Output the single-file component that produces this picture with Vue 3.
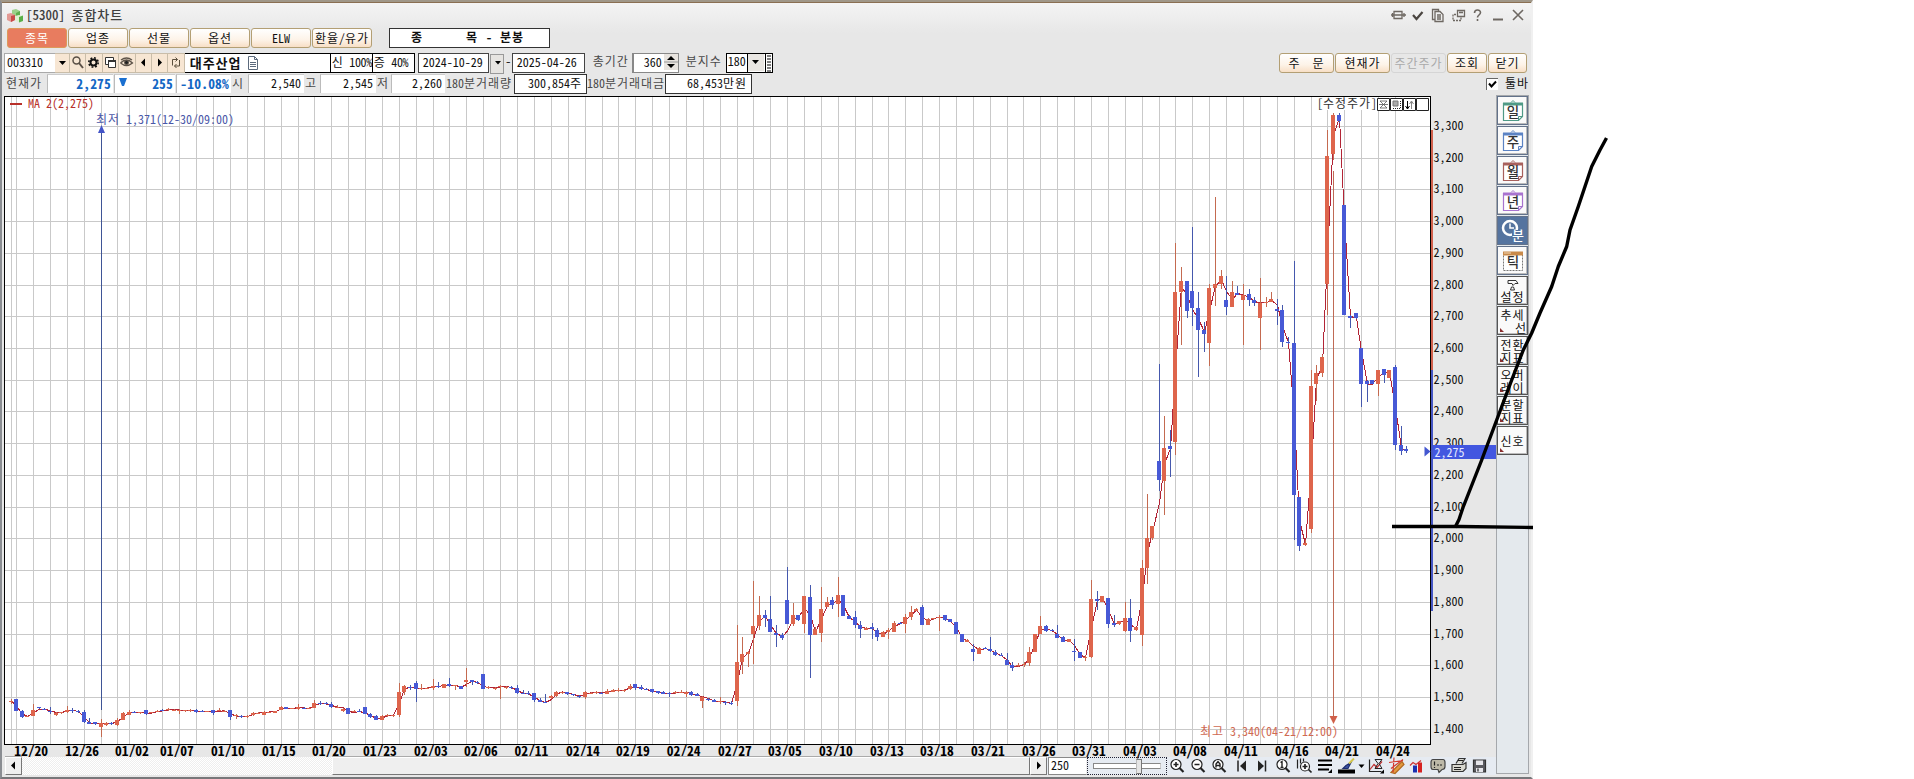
<script setup>
import { h } from 'vue'

// Splits text so that Hangul runs can be spaced onto a full-width cell.
const T = (props) => {
  const tag = props.svg !== undefined ? 'tspan' : 'span'
  return h(tag, { class: 'run' }, props.t.split(/([가-힣]+)/).filter(Boolean).map(s =>
    h(tag, { class: /[가-힣]/.test(s) ? 'ko' : 'en' }, s)))
}
T.props = ['t', 'svg']

const tabs = ['종목', '업종', '선물', '옵션', 'ELW', '환율/유가']

const gridX = [11, 16, 33, 50, 67, 84, 101, 117, 129, 146, 162, 179, 196, 213, 230, 247, 264, 281, 298, 314, 331, 348, 365, 382, 399, 416, 433, 449, 466, 483, 500, 517, 534, 551, 568, 585, 602, 618, 635, 652, 669, 686, 703, 720, 737, 753, 770, 787, 804, 821, 838, 855, 872, 888, 905, 922, 939, 956, 973, 990, 1007, 1023, 1040, 1057, 1074, 1091, 1108, 1125, 1142, 1159, 1175, 1192, 1209, 1226, 1243, 1260, 1277, 1294, 1311, 1327, 1344, 1361, 1378, 1395]
const prices = Array.from({ length: 20 }, (_, i) => {
  const v = String(3300 - i * 100)
  return { label: v[0] + ',' + v.slice(1), y: Math.floor(126.3 + i * 31.74) }
})
const dates = [['12/20', 31.3], ['12/26', 82.3], ['01/02', 132], ['01/07', 177], ['01/10', 228], ['01/15', 279], ['01/20', 329], ['01/23', 380], ['02/03', 431], ['02/06', 481], ['02/11', 531.4], ['02/14', 583], ['02/19', 633], ['02/24', 683.7], ['02/27', 735], ['03/05', 785], ['03/10', 836], ['03/13', 887], ['03/18', 937], ['03/21', 988], ['03/26', 1039], ['03/31', 1089], ['04/03', 1140], ['04/08', 1190], ['04/11', 1241], ['04/16', 1292], ['04/21', 1342], ['04/24', 1393]]

// Sessions: origin, horizontal unit, then "x colour high top bottom low" entries.
const segments = [
  [0, 560, 3, `34 r 417 424 426 432;48 b 417 417 453 453;66 b 450 454 470 474;82 r 467 469 471 472;100 r 432 450 467 467;118 b 442 442 444 446;134 b 444 446 449 449;152 b 441 452 456 462;168 r 455 460 464 468;185 r 455 457 459 462;203 r 438 451 456 458;218 b 445 450 452 460;236 b 450 453 455 458;252 b 450 456 486 489;267 b 475 487 491 493;285 b 486 487 492 494;304 r 478 489 501 530;318 r 485 489 496 498;335 b 487 489 492 495;351 r 475 480 494 498;369 r 456 458 479 479;388 r 450 457 464 466;404 b 452 455 458 460;420 r 455 457 459 461;438 b 450 450 461 464;455 r 455 457 459 460;472 r 450 453 455 457;488 b 447 450 452 453;505 r 443 448 451 454;522 r 447 449 451 452;538 r 446 449 452 462;556 r 449 450 452 455;572 r 447 449 452 456;589 b 447 450 456 460;606 b 450 453 455 455;622 r 452 453 455 455;640 b 450 450 459 464;658 r 445 450 453 453;674 r 450 453 456 457;690 b 450 450 470 479;708 r 461 466 469 476;725 b 464 467 469 473;742 r 464 469 471 473;760 r 456 458 466 468;776 r 457 459 461 463;793 r 452 456 464 466;808 r 455 457 459 460;826 r 452 454 459 459;844 r 437 441 450 450;860 b 440 442 447 447;878 r 443 444 446 446;895 r 432 441 448 450;912 b 440 443 446 446;928 r 441 444 446 446;943 r 420 429 444 444;961 b 423 430 433 435;978 b 425 430 432 433;994 b 427 432 441 445;1012 r 436 440 442 443;1029 r 443 448 454 456;1045 b 444 444 461 461;1062 r 450 452 457 457;1078 b 448 452 455 457;1096 b 442 442 461 463;1112 b 460 462 471 473;1129 b 466 468 480 480;1147 r 466 468 480 480;1163 r 463 466 469 470;1180 r 464 466 469 470;1198 r 369 396 464 471;1213 r 374 378 396 405;1231 b 374 380 383 391;1248 b 363 369 387 426;1264 r 372 384 387 389;1282 r 381 383 385 387;1300 r 357 378 383 390;1315 b 367 379 382 383;1332 r 371 372 384 384;1349 b 354 372 377 380;1366 r 374 376 379 389;1383 b 377 378 386 388;1399 r 324 360 366 380;1416 b 359 361 367 375;1432 b 364 366 369 371;1449 b 342 342 387 387`],
  [480, 560, 2.45, `22 r 377 382 385 388;37 r 382 384 387 389;50 r 375 379 382 416;64 r 377 380 383 386;78 b 377 380 384 388;91 b 374 383 398 402;106 b 390 398 401 403;119 b 393 398 402 405;133 b 400 400 419 425;147 b 415 420 425 426;160 b 402 425 429 429;175 r 405 408 414 416;187 r 394 397 407 410;201 r 396 397 399 401;215 b 396 397 403 405;229 b 401 403 406 408;243 b 406 409 412 414;258 r 394 396 410 416;272 r 396 398 401 403;286 r 394 397 399 401;298 b 396 398 401 401;312 r 388 392 402 402;326 r 386 391 395 396;340 r 384 389 393 395;354 r 387 389 394 396;368 r 371 378 387 389;381 b 372 372 383 389;396 b 375 382 386 389;409 b 384 386 388 389;422 b 386 387 396 398;437 b 392 394 398 401;450 b 394 397 401 403;464 b 396 398 401 410;478 r 394 396 400 401;493 r 391 395 397 399;506 r 392 396 402 410;518 b 394 396 404 407;532 b 400 403 407 409;546 r 407 411 423 443;560 b 415 417 420 422;575 b 418 421 425 427;589 r 412 424 427 431;602 b 422 427 430 435;616 b 424 429 432 436`],
  [720, 540, 3, `52 r 255 366 483 499;67 r 291 342 366 402;85 r 333 336 343 381;100 r 123 258 283 372;118 r 168 225 258 271;136 b 210 225 234 261;151 b 168 237 276 276;169 b 255 279 284 320;187 b 279 285 294 301;201 b 82 180 252 252;220 r 189 225 252 258;234 b 225 225 240 243;252 r 168 168 252 279;270 b 135 171 285 413;285 r 262 266 285 285;303 r 141 207 279 305;321 r 171 186 201 201;336 b 171 180 195 208;354 r 111 165 192 231;369 b 165 165 228 228;387 b 225 227 236 236;405 b 213 231 255 264;421 b 243 255 266 293;438 r 260 264 269 269;457 b 249 262 268 297;471 b 265 269 291 302;489 r 274 276 291 291;505 r 265 270 276 296;522 r 243 249 276 276;540 b 246 248 252 252;556 r 222 231 252 280;574 r 198 216 231 240;590 r 204 207 213 213;606 b 195 201 255 255;624 r 234 237 255 255;640 r 233 235 238 240;658 r 225 231 235 272;675 b 225 225 240 243;691 b 236 238 245 245;708 b 246 246 283 283;726 b 282 282 305 305;741 r 297 299 305 305;760 b 312 327 335 362;777 r 320 323 342 342;795 b 322 324 327 327;811 b 291 327 333 335;826 b 330 335 345 348;844 b 339 344 348 348;861 b 339 360 375 375;877 b 366 375 383 392;895 r 370 375 379 381;913 r 365 371 374 380;928 r 321 336 369 378;945 r 282 282 335 335;960 r 228 258 282 282;978 b 255 258 273 276;996 b 266 269 274 274;1012 b 255 282 293 293;1029 b 288 291 305 305;1047 r 296 298 305 305;1062 b 297 332 337 362;1080 b 336 336 354 354;1096 r 345 350 353 362;1113 r 120 177 350 353;1131 b 153 177 182 210;1146 r 168 168 186 186;1164 b 174 174 252 264;1183 b 225 249 255 260;1198 r 242 243 253 255;1215 r 186 234 273 276;1231 b 177 234 273 305;1248 r 260 261 270 272;1266 r 60 84 285 317`],
  [1080, 220, 3, `201 r 822 954 1044 1092;218 r 918 918 954 960;237 b 432 723 780 812;252 r 588 684 783 885;270 b 630 678 687 771;285 r 69 216 666 705;303 r 141 183 216 375;321 b 183 183 272 293;336 b 21 213 264 318;354 b 216 264 330 470;372 b 306 330 342 395;387 r 192 204 369 438;405 r -69 192 203 258;423 r 150 168 192 208;438 b 168 240 261 285;456 r 183 216 261 261;473 b 198 219 224 224;489 r 192 225 240 375;508 b 207 222 240 258;523 b 231 240 248 257;541 r 174 249 293 390;558 r 231 246 249 261;573 r 216 237 246 246;592 b 237 268 272 315;606 b 255 269 366 380;624 b 351 365 368 372;642 b 123 369 825 960;657 b 831 831 978 993;675 r 960 970 975 978;693 r 450 498 927 939;708 r 435 459 492 543;726 r 405 411 459 470;741 r -270 -192 192 285;759 r -321 -315 -198 -180;777 b -321 -315 -297 -290;792 b -45 -45 285 285;810 b 285 289 293 323;828 b 279 279 293 297;843 b 384 384 492 560;861 b 480 483 492 545;876 b 480 480 492 492;894 r 450 450 492 528;912 b 447 447 465 488;927 r 450 450 473 473;945 b 435 441 675 690;963 b 618 675 693 705;978 b 678 687 692 698`]
]
const candles = segments.flatMap(([ox, oy, k, src]) => src.split(';').map(e => {
  const [x, c, ...v] = e.split(' ')
  const [hi, top, bot, lo] = v.map(n => Math.round(oy + n / 3))
  return { x: Math.floor(ox + x / k), c, hi, top, bot: Math.max(bot, top + 1), lo }
}))
const close = c => (c.c === 'r' ? c.top : c.bot)
const ma = candles.map((c, i) => `${c.x + 0.5},${(close(c) + close(candles[Math.max(0, i - 1)])) / 2}`).join(' ')

const periods = [['일', '#4f9a86'], ['주', '#5b83c4'], ['월', '#a8605c'], ['년', '#a873cf']]
const tools = [['추세', '선'], ['전환', '지표'], ['오버', '레이'], ['분할', '지표'], ['신호']]
</script>

<template>
  <div class="page">
    <div class="window">
      <header class="title">
        <svg class="logo" width="18" height="14" viewBox="0 0 18 14">
          <path d="M5 1l4-1 4 2v5l-4 2-4-2z" fill="#9bd08a" /><path d="M9 4l4-2v5l-4 2z" fill="#5fae4e" />
          <path d="M0 5l4-1 4 2v5l-4 2-4-2z" fill="#e39a94" /><path d="M4 7l4-1v5l-4 2z" fill="#c94a48" />
          <path d="M8 7l4-1 4 1v5l-4 1.500-4-2z" fill="#dff0d2" /><path d="M12 8l4-1.500v5.500l-4 1.500z" fill="#58b048" />
        </svg>
        <span class="caption"><T t="[5300] 종합차트" /></span>
        <svg class="sys" width="140" height="18" viewBox="0 0 140 18" fill="none" stroke="#6e6862" stroke-width="1.300">
          <path d="M1 9h3M12 9h4M4 5.500h8v7H4zM2.500 7v4M4 9h8M14 7v4" />
          <path d="M23 9l3.500 4 6-7" stroke="#4b4641" stroke-width="2.200" />
          <path d="M44.500 13.500h-2v-10h6v2M45 5.500h5l3 3v7h-8zM47 9h4M47 11h4M47 13h4" />
          <path d="M67.500 4.500h7v6h-7zM69 6.500h4" /><path d="M66 8.500h-3v6h8v-3" stroke-dasharray="2 1" />
          <path d="M84.500 7c0-4 6-4 6-.5 0 2.500-3 2.500-3 5M87.500 13v2" stroke-width="1.600" />
          <path d="M103 13.500h10" stroke-width="2" />
          <path d="M123 4l10 10M133 4l-10 10" stroke-width="1.600" />
        </svg>
      </header>

      <nav class="tabs">
        <button v-for="(t, i) in tabs" :key="t" class="btn" :class="{ on: i === 0 }"><T :t="t" /></button>
        <div class="mode"><span>종</span><span>목</span><span>-</span><span>분봉</span></div>
      </nav>

      <div class="query">
        <span class="code"><T t="003310" /></span>
        <span class="ib"><svg width="15" height="17"><path d="M4 7h7l-3.500 4z" /></svg></span>
        <span class="ib"><svg width="15" height="17" fill="none" stroke="#5a5046" stroke-width="1.500"><circle cx="6.500" cy="6.500" r="3.500" /><path d="M9 9l4 5" stroke-width="2" /></svg></span>
        <span class="ib"><svg width="15" height="17" fill="none" stroke="#111"><circle cx="7.500" cy="8.500" r="3" stroke-width="2" /><circle cx="7.500" cy="8.500" r="4.700" stroke-width="1.600" stroke-dasharray="1.850 1.840" /></svg></span>
        <span class="ib"><svg width="15" height="17" fill="#fff" stroke="#333"><path d="M2.500 3.500h8v7h-8z" /><path d="M5.500 6.500h7v7h-7z" /><path d="M5 7h8" stroke-width="2" /></svg></span>
        <span class="ib"><svg width="15" height="17" fill="none" stroke="#5d5349"><path d="M1.500 9q6-6 12 0q-6 5-12 0M2 6q5.500-4 11 0" stroke-width="1.300" /><circle cx="7.500" cy="8.500" r="2" fill="#222" /></svg></span>
        <span class="ib"><svg width="15" height="17"><path d="M9 4.500v8l-4-4z" /></svg></span>
        <span class="ib"><svg width="15" height="17"><path d="M6 4.500v8l4-4z" /></svg></span>
        <span class="ib"><svg width="15" height="17" fill="none" stroke="#5b4f3c"><path d="M4.500 11.500v-6h5M7.500 3.500l2 2-2 2M11.500 6v6h-5M8.500 10l-2 2 2 2" /></svg></span>
        <span class="name"><b><T t="대주산업" /></b><svg width="12" height="14" fill="none" stroke="#5c6a7c"><path d="M1.500.500h6l3 3v10h-9zM7.500.500v3h3M3 6.500h6M3 8.500h6M3 10.500h6" /></svg></span>
        <span class="bk"><T t="신 100%" /></span>
        <span class="bk"><T t="증 40%" /></span>
        <i />
        <span class="date"><T t="2024-10-29" /></span>
        <span class="drop"><svg width="11" height="15"><path d="M3 6h6l-3 3.500z" /></svg></span>
        <span class="dash">-</span>
        <span class="date"><T t="2025-04-26" /></span>
        <span class="lab l1"><T t="총기간" /></span>
        <span class="spin"><T t="360" /><svg width="14" height="16"><path d="M0 0h14v16H0z" fill="#e8e4df" /><path d="M7 2l4 4H3zM3 10h8l-4 4z" /><path d="M0 8h14" stroke="#999" /></svg></span>
        <span class="lab l2"><T t="분지수" /></span>
        <span class="combo"><T t="180" /><svg width="25" height="18"><path d="M.5 0v18" stroke="#000" /><path d="M1 0h16v17H1z" fill="#e9e6e2" /><path d="M5 6h7l-3.500 4z" /><path d="M18.500 0v18" stroke="#000" /><path d="M20 2h4M20 5h4M20 8h4M20 11h4M20 14h4M20 17h4" stroke="#000" /></svg></span>
        <i />
        <button class="btn"><T t="주  문" /></button>
        <button class="btn"><T t="현재가" /></button>
        <button class="btn off"><T t="주간주가" /></button>
        <button class="btn"><T t="조회" /></button>
        <button class="btn"><T t="닫기" /></button>
      </div>

      <div class="quote">
        <span class="lab"><T t="현재가" /></span>
        <span class="val blue"><T t="2,275" /></span>
        <span class="val blue tri"><svg width="8" height="9"><path d="M0 0h8l-3 8h-2z" fill="#1a6fd0" /></svg><T t="255" /></span>
        <span class="val blue"><T t="-10.08%" /></span>
        <span class="lab"><T t="시" /></span><span class="val"><T t="2,540" /></span>
        <span class="lab"><T t="고" /></span><span class="val"><T t="2,545" /></span>
        <span class="lab"><T t="저" /></span><span class="val last"><T t="2,260" /></span>
        <span class="lab"><T t="180분거래량" /></span><span class="val box"><T t="300,854주" /></span>
        <span class="lab"><T t="180분거래대금" /></span><span class="val box"><T t="68,453만원" /></span>
        <i />
        <label class="check"><svg width="12" height="12"><path d="M0 0h12v12H0z" fill="#fff" /><path d="M.5 12V.5H12" stroke="#666" fill="none" /><path d="M3 5.500l2.500 3L10 3.500" fill="none" stroke="#000" stroke-width="2" /></svg><T t="툴바" /></label>
      </div>

      <div class="main">
        <div class="left">
          <svg class="chart" width="1493" height="662" viewBox="3 95 1493 662">
            <rect x="4.500" y="96.500" width="1426" height="648" fill="#fff" />
            <g class="crisp">
              <rect v-for="x in gridX" :key="'x' + x" :x="x" y="97" width="1" height="647" fill="#c9c9c9" />
              <rect v-for="p in prices" :key="p.y" x="5" :y="p.y" width="1425" height="1" fill="#c9c9c9" />
              <rect x="101" y="128" width="1" height="582" fill="#3f5596" />
              <polyline :points="ma" fill="none" stroke="#b22436" />
              <g v-for="(c, i) in candles" :key="i" :class="c.c">
                <rect :x="c.x" :y="c.hi" width="1" :height="Math.max(1, c.lo - c.hi)" class="wick" />
                <rect :x="c.x - 2" :y="c.top" width="4" :height="c.bot - c.top" />
              </g>
              <rect x="1333" y="171" width="1" height="548" fill="#bf6a55" />
              <rect x="4" y="96" width="1427" height="1" /><rect x="4" y="744" width="1427" height="1" />
              <rect x="4" y="96" width="1" height="649" /><rect x="1430" y="96" width="1" height="649" />
              <rect x="1431" y="130" width="2" height="240" fill="#d2614d" />
              <rect x="1431" y="370" width="2" height="241" fill="#4556c4" />
              <rect x="10" y="103" width="12" height="2" fill="#b8302a" />
            </g>
            <path d="M101.500 125l3.500 8h-7z" fill="#4455c8" />
            <path d="M1333.500 724l4-8h-8z" fill="#d0604a" />
            <path d="M1424.500 446.500l6 5-6 5z" fill="#4357d0" />
            <text x="28" y="108" fill="#b8302a"><T svg t="MA 2(2,275)" /></text>
            <text x="96" y="124" fill="#4a57a8"><T svg t="최저 1,371(12-30/09:00)" /></text>
            <text x="1200" y="736" fill="#cf6a52"><T svg t="최고 3,340(04-21/12:00)" /></text>
            <rect x="1317" y="97" width="60" height="13" fill="#fff" />
            <text x="1317" y="108" fill="#333"><T svg t="[수정주가]" /></text>
            <g fill="#fff" stroke="#222">
              <path d="M1377.500 98.500h12v12h-12zM1390.500 98.500h12v12h-12zM1403.500 98.500h12v12h-12zM1416.500 98.500h12v12h-12z" />
              <path d="M1380 101h7l-7 7h7l-7-7M1379 104.500h9" fill="none" stroke="#555" stroke-width=".8" />
              <path d="M1393 101h5v5h-5z" fill="#aaa" stroke="#777" /><path d="M1400.500 101v8M1393 108.500h8" stroke-dasharray="1 1" />
              <path d="M1407.500 101v8M1405.500 106l2 3 2-3" stroke="#000" /><path d="M1411.500 109v-8M1409.500 104l2-3 2 3" stroke="#888" />
            </g>
            <text v-for="p in prices" :key="p.label" x="1433.500" :y="p.y + 3.500" fill="#111"><T svg :t="p.label" /></text>
            <rect x="1433" y="445" width="63" height="14" fill="#4257e0" />
            <text x="1434.500" y="456.500" fill="#e4e8ff"><T svg t="2,275" /></text>
            <text v-for="d in dates" :key="d[0]" class="day" :x="d[1] - 17" y="755.500" fill="#000"><T svg :t="d[0]" /></text>
          </svg>

          <footer class="bar">
            <span class="sb"><svg width="15" height="15"><path d="M9 3.500v8l-4-4z" /></svg></span>
            <span class="track" />
            <span class="thumb" />
            <span class="sb"><svg width="14" height="15"><path d="M6 3.500v8l4-4z" /></svg></span>
            <span class="count"><T t="250" /></span>
            <span class="slider"><span class="rail" /><span class="knob" /><span class="rail end" /></span>
            <svg class="icons" width="328" height="18" viewBox="1167 757.500 328 18" fill="none" stroke="#222" stroke-width="1.200">
              <g v-for="x in [1176, 1197, 1218, 1282]" :key="x"><circle :cx="x" cy="765" r="5" fill="#fff" /><path :d="`M${x + 3.500} 768.500l4 4`" stroke-width="2.200" /></g>
              <path d="M1173.500 765h5M1176 762.500v5M1194.500 765h5" stroke-width="1.600" />
              <path d="M1216 768v-3.500l2-2.500 2 2.500v3.500M1216 766h4" stroke-width="1.400" />
              <path d="M1280.500 763l1.500-1v6M1280.500 768h3" stroke-width="1.400" />
              <path d="M1238 761v11" stroke-width="1.500" /><path d="M1246 761v11l-6-5.500z" fill="#222" stroke="none" />
              <path d="M1265.500 761v11" stroke-width="1.500" /><path d="M1258 761v11l6-5.500z" fill="#222" stroke="none" />
              <path d="M1297.500 760v9M1300.500 759v5M1303.500 759v3" /><circle cx="1305" cy="767" r="4.500" fill="#fff" /><path d="M1302.500 767h5M1305 764.500v5M1308.500 770l3 3" stroke-width="1.700" />
              <path d="M1318 761h14M1318 765.500h14M1318 770h11" stroke="#000" stroke-width="2.200" /><path d="M1332 769.500v4h-4z" fill="#000" stroke="none" />
              <path d="M1338 772h17" stroke="#000" stroke-width="4" /><path d="M1343 769l3-3 5-3-3 6z" fill="#3850a0" stroke="#1d2d70" /><path d="M1349 764l5-5" stroke="#d4c64b" stroke-width="2" />
              <path d="M1358.500 765h6l-3 3.500z" fill="#000" stroke="none" />
              <path d="M1369.500 760v12h12" /><path d="M1370 770l4-5 3 3 5-6" stroke="#c03030" /><path d="M1375 760h7l-3 4 3 5h-7l3-5z" stroke-width="1" /><path d="M1384 770v4h-4z" fill="#000" stroke="none" />
              <path d="M1391 773l11-11 2 3-9 9z" fill="#e39a3e" stroke="#b06a20" /><path d="M1389 763l14-2M1394 758l-1 15M1391 769l12-9" stroke="#d43a2a" />
              <path d="M1410 766l3-3 3 2 5-4" stroke="#cc3333" stroke-width="1.200" /><path d="M1413 766h4v7h-4z" fill="#1a2fb0" stroke="none" /><path d="M1418 763h4v10h-4z" fill="#d62222" stroke="none" />
              <path d="M1433 760h10q2 0 2 3v4q0 3-3 3l-3 3-1-3h-5q-2 0-2-3v-4q0-3 2-3z" fill="#bdb9a8" stroke="#444" /><path d="M1434.500 762v4M1434.500 767.500v1M1437 765.500h2M1440 765.500h2" />
              <path d="M1456 764l3-5h6l-3 5M1452 765h11l3-2v6l-3 3h-11z" fill="#d8d8d0" stroke="#333" /><path d="M1454 768h7M1454 770h7M1458 761h5" stroke-width="1" />
              <path d="M1473.500 760.500h12v12h-12z" fill="#5a5a60" stroke="#333" /><path d="M1476 761h7v4.500h-7zM1476 768.500h7v4h-7z" fill="#e5e5ea" stroke="none" /><path d="M1478 769v3" />
            </svg>
          </footer>
        </div>

        <aside class="tools">
          <div v-for="[t, c] in periods" :key="t" class="tool">
            <svg width="24" height="24" fill="none"><path d="M2.500 4.500h19v13l-4 4h-15z" fill="#fff" :stroke="c" stroke-width="1.200" /><path d="M2 5h20" :stroke="c" stroke-width="3" /><path d="M10 3.500l2-2 2 2M17.500 21.500v-4h4" :stroke="c" /><text x="12" y="17.500" class="big">{{ t }}</text></svg>
          </div>
          <div class="tool active">
            <svg width="26" height="26" fill="none" stroke="#fff"><circle cx="10" cy="10" r="7" stroke-width="2.500" /><path d="M10 5.500V10h4" stroke-width="1.500" /><path d="M12 12h13v13H12z" fill="#55749f" stroke="none" /><text x="18" y="22" class="big wt">분</text></svg>
          </div>
          <div class="tool">
            <svg width="24" height="24" fill="none"><path d="M2.500 3.500h19v18h-19z" fill="#fff" stroke="#777" stroke-dasharray="2 1" /><path d="M2 4.500h20" stroke="#c98a4a" stroke-width="4" /><path d="M3 4h7" stroke="#f2d9b8" /><text x="12" y="18" class="big">틱</text></svg>
          </div>
          <div class="tool set">
            <svg width="14" height="12" fill="none" stroke="#333"><path d="M2 1.500h8l2 3M2 1.500v3h4l1 2 2-2h3M5.500 8l-1 3h4l-1-3z" /></svg>
            <T t="설정" />
          </div>
          <div v-for="(t, i) in tools" :key="i" class="tool txt" :class="{ right: i === 0 }">
            <span v-for="l in t" :key="l"><T :t="l" /></span>
          </div>
        </aside>
      </div>
    </div>

    <svg class="stroke" width="1914" height="779" fill="none" stroke="#000" stroke-width="3.400" stroke-linejoin="round">
      <path d="M1392 526.500H1460L1533 527.500" />
      <path d="M1455 527.500l4-8 4-12 18.700-47.500 15-40 15-40 11.600-30 8.400-17 8.300-20 11.700-26.500 6.600-20 8.400-20 3.300-16.500 8.300-23.500 6.700-20 6.700-20 8.300-16.500 6.500-12" />
    </svg>
  </div>
</template>

<style>
body { background: #fff; }
.ko { letter-spacing: 0.96px; }
.run { white-space: pre; }
</style>

<style scoped>
.page { position: relative; width: 1914px; height: 779px; overflow: hidden; background: #fff; font: 12px/16px "Noto Sans CJK KR", "Noto Sans", sans-serif; font-feature-settings: "hwid"; color: #111; }
.stroke { position: absolute; left: 0; top: 0; }
svg { display: block; flex: none; }
.window { width: 1533px; height: 779px; box-sizing: border-box; display: flex; flex-direction: column; border-left: 2px solid #8a8d92; border-top: 3px solid #a09788; border-bottom: 2px solid #77777a; border-right: 2px solid #f0f0f0; background: linear-gradient(#f4f4f4, #e7e7e7 30px); }
.title { height: 23px; margin-bottom: 1px; display: flex; align-items: center; box-shadow: 0 -1px #8a6f52; }
.logo { margin: 3px 1px 0 5px; }
.caption { font-size: 13px; color: #3f3f3f; font-weight: 500; }
.sys { margin: 0 1px 0 auto; }
.btn { box-sizing: border-box; height: 20px; padding: 0; border: 1px solid #b39f74; border-radius: 3px; background: linear-gradient(#fff, #fdf3e8 60%, #f8dfc6); font: inherit; line-height: 16px; font-feature-settings: inherit; color: #111; text-align: center; white-space: pre; overflow: hidden; }
.btn.on { background: #e87c5f; color: #fff; border-color: #dd9a5a; }
.btn.off { background: transparent; border-color: #d5d5d5; color: #aaa; }
.tabs { height: 20px; margin-top: 1px; display: grid; grid-template-columns: repeat(6, 60px) 177px; column-gap: 1px; padding-left: 5px; }
.mode { margin-left: 16px; width: 161px; height: 20px; box-sizing: border-box; border: 1px solid #333; background: #fff; display: flex; font-weight: 700; line-height: 16px; letter-spacing: 1px; }
.mode span:nth-child(1) { margin-left: 21px; width: 55px; }
.mode span:nth-child(2) { width: 20px; }
.mode span:nth-child(3) { width: 14px; }
.query { height: 20px; margin-top: 5px; display: grid; grid-template-columns: 51px 15px repeat(7, 16.400px) 146px 42px 42px 3px 71px 16px 7px 73px 47px 47px 47px 47px 1fr 56px 56px 56px 41px 40px; padding: 0 3px 0 2px; line-height: 16px; white-space: pre; }
.query > * { box-sizing: border-box; height: 20px; overflow: hidden; }
.query > .btn { margin-right: 1px; }
.code { background: #fff; border: 1px solid #aaa; border-right: 0; padding-left: 2px; line-height: 15px; }
.ib { background: #f7e6d3; border: solid #c9bda9; border-width: 1px 1px 1px 0; }
.name { background: #fff; border: 1px solid #000; border-width: 1px 1px 1px 0; display: flex; align-items: center; padding-left: 5px; gap: 6px; }
.name b { letter-spacing: 1px; font-size: 13px; }
.bk { background: #fff; border: 1px solid #000; border-left: 0; padding-left: 1px; letter-spacing: -0.4px; }
.date { background: #fff; border: 1px solid #444; padding-left: 4px; }
.drop { border: 1px solid #999; background: #e6e4e1; margin: 1px; padding: 0 1px; }
.dash { text-align: center; }
.lab { color: #4a4a4a; white-space: pre; }
.l1 { padding-left: 8px; }
.l2 { padding-left: 7px; }
.spin { background: #fff; border: 1px solid #888; border-left-width: 2px; display: flex; justify-content: flex-end; gap: 2px; line-height: 15px; }
.combo { background: #fff; border: 1px solid #000; display: flex; justify-content: space-between; padding-left: 1px; line-height: 14px; }
.quote { height: 20px; margin-top: 1px; display: grid; grid-template-columns: 41px 67px 62px 56px 16px 57px 15px 57px 14px 55px 68px 73px 78px 87px 1fr 45px; padding-left: 4px; line-height: 17px; }
.val { box-sizing: border-box; height: 19px; background: #fff; border-left: 1px solid #bbb; border-top: 1px solid #ccc; text-align: right; padding-right: 3px; line-height: 16px; margin-right: 1px; }
.val.box { border: 1px solid #333; padding-right: 4px; margin: 0; height: 20px; }
.val.blue { color: #1467c4; font-size: 13.500px; font-weight: 700; letter-spacing: 0.2px; padding-right: 2px; }
.tri { display: flex; justify-content: space-between; padding-left: 4px; }
.tri svg { margin-top: 3px; }
.check { display: flex; gap: 7px; }
.check svg { margin-top: 4px; }
.main { display: flex; margin-top: 1px; height: 681px; }
.left { width: 1494px; flex: none; }
.chart { margin-left: 1px; font-size: 12px; overflow: visible; }
.crisp { shape-rendering: crispEdges; }
.r { fill: #de654c; }
.b { fill: #4759d6; }
.r .wick { fill: #c46a50; }
.b .wick { fill: #4558ad; }
.day { font-size: 13.500px; font-weight: 700; }
.bar { display: flex; height: 18px; margin-left: 3px; background: #e6ebf2; }
.sb, .thumb { box-sizing: border-box; height: 18px; border: 1px solid; border-color: #fff #777 #777 #fff; background: #efefef; box-shadow: 0 -1px #aaa; }
.sb { width: 17px; }
.track { width: 310px; background: repeating-conic-gradient(#fff 0 25%, #eee 0 50%) 0 0 / 2px 2px; }
.thumb { width: 698px; }
.count { box-sizing: border-box; width: 39px; margin-left: 1px; background: #fff; border: 1px solid #888; border-right-color: #eee; padding-left: 2px; line-height: 13px; }
.slider { box-sizing: border-box; width: 80px; height: 18px; border: 1px dotted #223; display: flex; align-items: center; padding-left: 5px; }
.rail { width: 43px; height: 6px; box-sizing: border-box; border: 1px solid #888; border-right: 0; background: #fff; }
.rail.end { width: 19px; border-left: 0; border-right: 1px solid #ccc; }
.knob { width: 4px; height: 13px; background: #e5e5e5; border: 1px solid #777; border-left-color: #bbb; }
.tools { box-sizing: border-box; flex: none; width: 33px; height: 679px; border: 1px solid #a5a8ac; background: #e4e9ed; }
.tool { box-sizing: border-box; width: 31px; height: 29px; margin-bottom: 1px; border: 1px solid #63728a; background: #fafafa; box-shadow: inset -1px -1px #bbb; display: flex; align-items: center; justify-content: center; line-height: 12px; }
.big { font-size: 13.500px; text-anchor: middle; fill: #333; stroke: none; font-weight: 500; }
.big.wt { fill: #fff; font-size: 13px; }
.active { background: #55749f; box-shadow: none; }
.set { flex-direction: column; border-color: #555; }
.txt { flex-direction: column; border-color: #555; line-height: 13px; position: relative; }
.txt::after { content: ""; position: absolute; left: 2px; bottom: 2px; border: 2px solid transparent; border-left-color: #8a2f2f; border-bottom-color: #8a2f2f; }
.txt.right span:nth-child(2) { align-self: flex-end; }
</style>
